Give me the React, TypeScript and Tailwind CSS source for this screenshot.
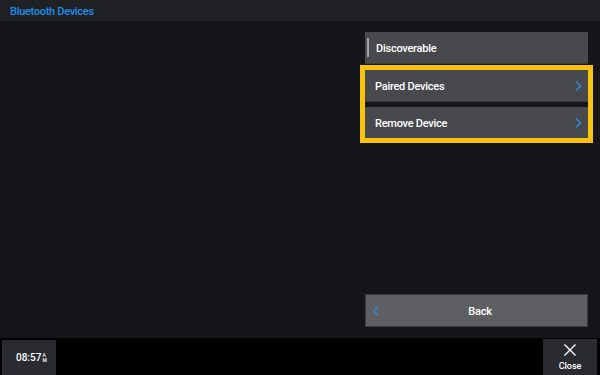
import React from "react";

const Chevron = ({ dir }: { dir: "left" | "right" }) => (
  <svg width="8" height="12" viewBox="0 0 8 12" fill="none">
    {dir === "right" ? (
      <path d="M2 1.5 L6.5 6 L2 10.5" stroke="#2a8fe6" strokeWidth="1.3" />
    ) : (
      <path d="M6 1.5 L1.5 6 L6 10.5" stroke="#2a8fe6" strokeWidth="1.3" />
    )}
  </svg>
);

export default function App() {
  return (
    <div
      className="w-[600px] h-[375px] flex flex-col bg-[#151619] text-white overflow-hidden"
      style={{ fontFamily: "Roboto, 'Liberation Sans', sans-serif" }}
    >
      <div className="h-[21px] bg-[#202125] flex items-center px-[10px] shrink-0">
        <span className="text-[11px] font-medium tracking-[-0.3px] text-[#1e8fe6] leading-none pt-[1px]">Bluetooth Devices</span>
      </div>
      <div className="flex-1 flex justify-end pr-[12px] pt-[11px] pb-[11px]">
        <div className="w-[223px] flex flex-col justify-between">
          <div className="flex flex-col">
            <div className="h-[32px] bg-[#48494d] border-b border-[#3a3b3e] flex items-center pl-[2px]">
              <div className="w-[2px] h-[19px] bg-[#a3a4a8] mr-[7px]" />
              <span className="text-[11px] font-medium tracking-[-0.25px] leading-none pt-[2px]">Discoverable</span>
            </div>
            <div className="mt-[1px] mx-[-5px] border-[5px] border-[#f8c30c] flex flex-col gap-[5px] bg-[#151619]">
              <div className="h-[32px] bg-[#48494d] border-b border-[#3a3b3e] flex items-center justify-between pl-[10px] pr-[6px]">
                <span className="text-[11px] font-medium tracking-[-0.25px] leading-none pt-[2px]">Paired Devices</span>
                <Chevron dir="right" />
              </div>
              <div className="h-[31px] bg-[#48494d] flex items-center justify-between pl-[10px] pr-[6px]">
                <span className="text-[11px] font-medium tracking-[-0.25px] leading-none pt-[2px]">Remove Device</span>
                <Chevron dir="right" />
              </div>
            </div>
          </div>
          <div className="h-[33px] bg-[#5e5f63] border border-[#3c3d41] flex items-center relative pl-[7px]">
            <div className="absolute left-[6px] top-[10px]">
              <Chevron dir="left" />
            </div>
            <span className="flex-1 text-center text-[11px] font-medium tracking-[-0.25px] leading-none pt-[2px]">Back</span>
          </div>
        </div>
      </div>
      <div className="h-[37px] bg-black flex justify-between shrink-0">
        <div className="ml-[2px] mt-[2px] w-[54px] bg-[#2a2b30] flex items-center pl-[14px]">
          <span className="text-[10px] font-medium leading-none">08:57</span>
          <span className="flex flex-col text-[5px] font-medium leading-[5px] ml-[1px]">
            <span>A</span>
            <span>M</span>
          </span>
        </div>
        <div className="mr-[3px] mt-[1px] w-[54px] bg-[#2a2b30] flex flex-col items-center pt-[4px]">
          <svg width="14" height="14" viewBox="0 0 14 14">
            <path d="M1.5 1.5 L12.5 12.5 M12.5 1.5 L1.5 12.5" stroke="#ffffff" strokeWidth="1.4" />
          </svg>
          <span className="text-[9px] font-medium leading-none mt-[5px]">Close</span>
        </div>
      </div>
    </div>
  );
}
